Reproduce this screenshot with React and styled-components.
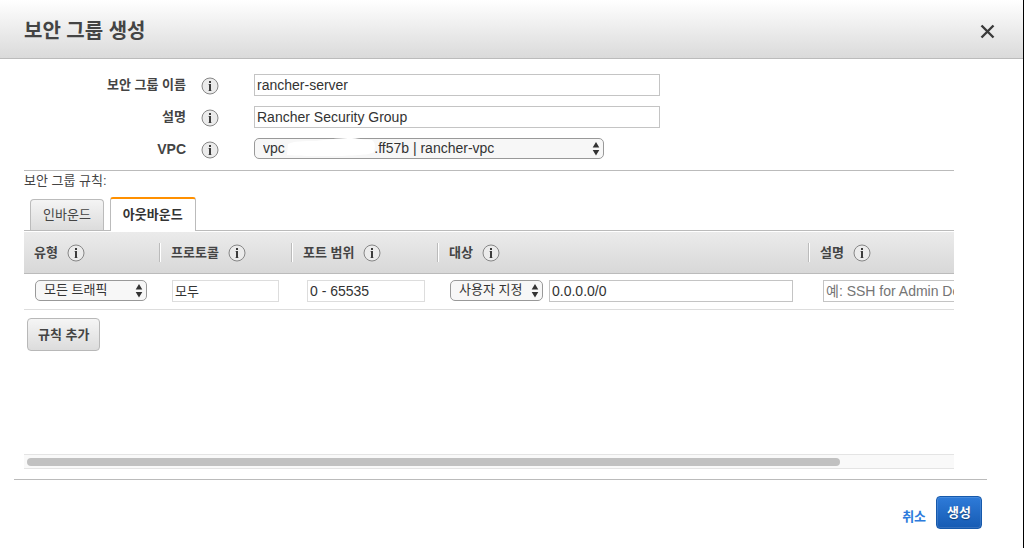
import React from 'react';
import styled, { createGlobalStyle, css } from 'styled-components';

const GlobalStyle = createGlobalStyle`
  *, *::before, *::after { box-sizing: border-box; }
  body {
    margin: 0;
    background: #fff;
    color: #444;
    font: 13px/18px "Liberation Sans", Arial, "Noto Sans CJK KR", sans-serif;
  }
  button, input, select { font: inherit; color: inherit; margin: 0; }
`;

const Dialog = styled.main`
  min-height: 100vh;
  border-right: 1px solid #000;
`;

const Header = styled.header`
  display: flex;
  align-items: center;
  justify-content: space-between;
  height: 59px;
  padding: 4px 28px 0 24px;
  border-bottom: 1px solid #bbb;
  background: linear-gradient(#fff, #dadada);
`;

const Title = styled.h1`
  margin: 0;
  font-size: 20px;
  line-height: 28px;
`;

const CloseButton = styled.button`
  display: flex;
  padding: 0;
  border: 0;
  background: none;
  cursor: pointer;
`;

const Body = styled.div`
  padding: 15px 69px 0 24px;
`;

const Form = styled.div`
  display: flex;
  flex-direction: column;
  gap: 10px;
  padding-bottom: 10px;
`;

const FormRow = styled.div`
  display: grid;
  grid-template-columns: 177px 53px minmax(0, 406px);
  align-items: center;
  height: 22px;
`;

const Label = styled.label`
  padding-right: 15px;
  text-align: right;
  font-weight: bold;
  font-size: ${(p) => (p.$latin ? '14px' : '13px')};
`;

const InfoButton = styled.button`
  display: flex;
  width: 18px;
  padding: 0;
  border: 0;
  background: none;
  margin-top: ${(p) => (p.$low ? '2px' : '0')};
`;

const TextInput = styled.input`
  width: ${(p) => p.$width || '100%'};
  height: 22px;
  padding: 0 2px;
  border: 1px solid ${(p) => (p.readOnly ? '#ddd' : '#c4c4c4')};
  border-radius: 0;
  background: #fff;
  color: #333;
  font-size: ${(p) => (p.$small ? '13px' : '14px')};
  &::placeholder { color: #757575; opacity: 1; }
`;

const SelectBox = styled.span`
  position: relative;
  display: block;
  width: ${(p) => p.$width};
  max-width: 100%;
  height: 22px;
`;

const Select = styled.select`
  display: block;
  appearance: none;
  width: 100%;
  height: 21px;
  padding: 0 16px 1px 8px;
  border: 1px solid #999;
  border-radius: 5px;
  background: #f7f7f7;
  color: #333;
  font-size: ${(p) => (p.$latin ? '14px' : '13px')};
`;

const SelectArrows = styled.svg`
  position: absolute;
  right: 4px;
  top: 4px;
  pointer-events: none;
`;

const Redaction = styled.svg`
  position: absolute;
  left: 32px;
  top: 0;
  pointer-events: none;
`;

const Rules = styled.section`
  border-top: 1px solid #bbb;
`;

const RulesTitle = styled.h2`
  margin: 0;
  padding-top: 1px;
  font-size: 13px;
  font-weight: normal;
`;

const Tabs = styled.div`
  display: flex;
  align-items: flex-end;
  gap: 6px;
  height: 41px;
  padding-left: 6px;
  border-bottom: 1px solid #bbb;
`;

const Tab = styled.button`
  height: 31px;
  padding: 0 12px;
  border: 1px solid #bbb;
  border-bottom: 0;
  border-radius: 4px 4px 0 0;
  background: linear-gradient(#f4f4f4, #dcdcdc);
  ${(p) => p.$active && css`
    height: 34px;
    margin-bottom: -1px;
    border-top: 2px solid #ff9000;
    border-radius: 3px 3px 0 0;
    background: #fff;
    color: #333;
    font-weight: bold;
  `}
`;

const ScrollArea = styled.div`
  height: 223px;
  padding-top: 1px;
  overflow: hidden;
`;

const Table = styled.table`
  width: 1062px;
  table-layout: fixed;
  border-collapse: separate;
  border-spacing: 0;
`;

const HeadCell = styled.th`
  height: 42px;
  padding: 0;
  border-bottom: 1px solid #bbb;
  background: linear-gradient(#ebebeb, #d8d8d8);
  text-align: left;
`;

const HeadContent = styled.div`
  display: flex;
  align-items: center;
  gap: 9px;
  height: 19px;
  padding-left: 10px;
  ${(p) => p.$divided && css`
    border-left: 1px solid #bbb;
    box-shadow: inset 1px 0 #fff;
    padding-left: 11px;
  `}
`;

const Cell = styled.td`
  height: 36px;
  padding: 0 0 2px ${(p) => p.$indent};
  border-bottom: 1px solid #ddd;
`;

const Controls = styled.div`
  display: flex;
  align-items: center;
  gap: 6px;
`;

const CellSelect = styled(Controls)`
  align-items: flex-end;
`;

const Button = styled.button`
  height: 33px;
  padding: 0 10px;
  border: 1px solid #b8b8b8;
  border-radius: 4px;
  background: linear-gradient(#f5f5f5, #dcdcdc);
  font-weight: bold;
  ${(p) => p.$primary && css`
    border-color: #1659ab;
    background: linear-gradient(#2e7bd9, #165bb3);
    box-shadow: inset 0 0 0 1px rgba(255, 255, 255, 0.12);
    color: #fff;
    text-shadow: 0 1px 1px rgba(0, 0, 0, 0.4);
  `}
`;

const AddRule = styled(Button)`
  display: block;
  margin: 8px 3px 0;
`;

const ScrollTrack = styled.div`
  height: 15px;
  padding: 3px;
  border-top: 1px solid #e4e4e4;
  border-bottom: 1px solid #e4e4e4;
  background: #f9f9f9;
`;

const ScrollThumb = styled.div`
  width: 88%;
  height: 8px;
  border-radius: 4px;
  background: #c1c1c1;
`;

const Footer = styled.footer`
  display: flex;
  justify-content: flex-end;
  align-items: center;
  gap: 10px;
  margin: 10px 36px 0 14px;
  padding: 16px 5px;
  border-top: 1px solid #bbb;
`;

const CancelLink = styled.a`
  padding-top: 8px;
  color: #2d7bdc;
  font-weight: bold;
  text-decoration: none;
`;

function Info({ low, name }) {
  return (
    <InfoButton type="button" $low={low} aria-label={name}>
      <svg width="18" height="18" viewBox="0 0 18 18">
        <circle cx="9" cy="9" r="8" fill="#ebebeb" stroke="#868686" />
        <path d="M8 4h2v2H8zM8 7h2v7H8z" fill="#3c3c3c" />
        <path d="M7 7h1v1H7zM7 13h1v1H7zM10 13h1v1h-1z" fill="#b5b5b5" />
      </svg>
    </InfoButton>
  );
}

function Dropdown({ width, latin, children, overlay, ...rest }) {
  return (
    <SelectBox $width={width}>
      <Select $latin={latin} {...rest}>{children}</Select>
      {overlay}
      <SelectArrows width="8" height="14" viewBox="0 0 8 14">
        <path d="M4 0 7.3 5.6H.7zM4 13.5.7 7.9h6.6z" fill="#333" />
      </SelectArrows>
    </SelectBox>
  );
}

const columns = [
  { name: '유형', width: 135 },
  { name: '프로토콜', width: 132 },
  { name: '포트 범위', width: 146 },
  { name: '대상', width: 371 },
  { name: '설명', width: 278 },
];

const vpcName = 'vpc' + '\u00a0'.repeat(23) + '.ff57b | rancher-vpc';

export default function App() {
  return (
    <Dialog>
      <GlobalStyle />
      <Header>
        <Title>보안 그룹 생성</Title>
        <CloseButton type="button" aria-label="닫기">
          <svg width="15" height="15" viewBox="0 0 15 15">
            <path d="M1.5 1.5l12 12M13.5 1.5l-12 12" stroke="#3a3a3a" strokeWidth="2.4" />
          </svg>
        </CloseButton>
      </Header>
      <Body>
        <Form>
          <FormRow>
            <Label htmlFor="group-name">보안 그룹 이름</Label>
            <Info low name="보안 그룹 이름 정보" />
            <TextInput id="group-name" defaultValue="rancher-server" />
          </FormRow>
          <FormRow>
            <Label htmlFor="group-desc">설명</Label>
            <Info low name="설명 정보" />
            <TextInput id="group-desc" defaultValue="Rancher Security Group" />
          </FormRow>
          <FormRow>
            <Label htmlFor="vpc" $latin>VPC</Label>
            <Info low name="VPC 정보" />
            <Dropdown
              id="vpc"
              width="350px"
              latin
              overlay={
                <Redaction width="90" height="20" viewBox="0 0 90 20">
                  <path d="M2 6C8 3 18 3 30 3 45 1 55 0 66 0 75 1 80 2 86 2 90 5 89 10 88 14 86 16 78 17 55 18 30 18 8 18 1 17-1 11 2 6z" fill="#fff" />
                </Redaction>
              }
            >
              <option>{vpcName}</option>
            </Dropdown>
          </FormRow>
        </Form>
        <Rules>
          <RulesTitle>보안 그룹 규칙:</RulesTitle>
          <Tabs role="tablist">
            <Tab type="button" role="tab" aria-selected="false">인바운드</Tab>
            <Tab type="button" role="tab" aria-selected="true" $active>아웃바운드</Tab>
          </Tabs>
          <ScrollArea>
            <Table>
              <colgroup>
                {columns.map((c) => <col key={c.name} width={c.width} />)}
              </colgroup>
              <thead>
                <tr>
                  {columns.map((c, i) => (
                    <HeadCell key={c.name} scope="col">
                      <HeadContent $divided={i > 0}>
                        {c.name}
                        <Info name={`${c.name} 정보`} />
                      </HeadContent>
                    </HeadCell>
                  ))}
                </tr>
              </thead>
              <tbody>
                <tr>
                  <Cell $indent="11px">
                    <CellSelect>
                      <Dropdown width="112px" aria-label="유형"><option>모든 트래픽</option></Dropdown>
                    </CellSelect>
                  </Cell>
                  <Cell $indent="13px">
                    <Controls>
                      <TextInput $small $width="107px" readOnly aria-label="프로토콜" defaultValue="모두" />
                    </Controls>
                  </Cell>
                  <Cell $indent="16px">
                    <Controls>
                      <TextInput $width="118px" readOnly aria-label="포트 범위" defaultValue="0 - 65535" />
                    </Controls>
                  </Cell>
                  <Cell $indent="13px">
                    <Controls>
                      <Dropdown width="93px" aria-label="대상"><option>사용자 지정</option></Dropdown>
                      <TextInput $width="244px" aria-label="대상 주소" defaultValue="0.0.0.0/0" />
                    </Controls>
                  </Cell>
                  <Cell $indent="15px">
                    <Controls>
                      <TextInput $width="244px" aria-label="설명" placeholder="예: SSH for Admin Desktop" />
                    </Controls>
                  </Cell>
                </tr>
              </tbody>
            </Table>
            <AddRule type="button">규칙 추가</AddRule>
          </ScrollArea>
          <ScrollTrack><ScrollThumb /></ScrollTrack>
        </Rules>
      </Body>
      <Footer>
        <CancelLink href="#">취소</CancelLink>
        <Button type="button" $primary>생성</Button>
      </Footer>
    </Dialog>
  );
}
